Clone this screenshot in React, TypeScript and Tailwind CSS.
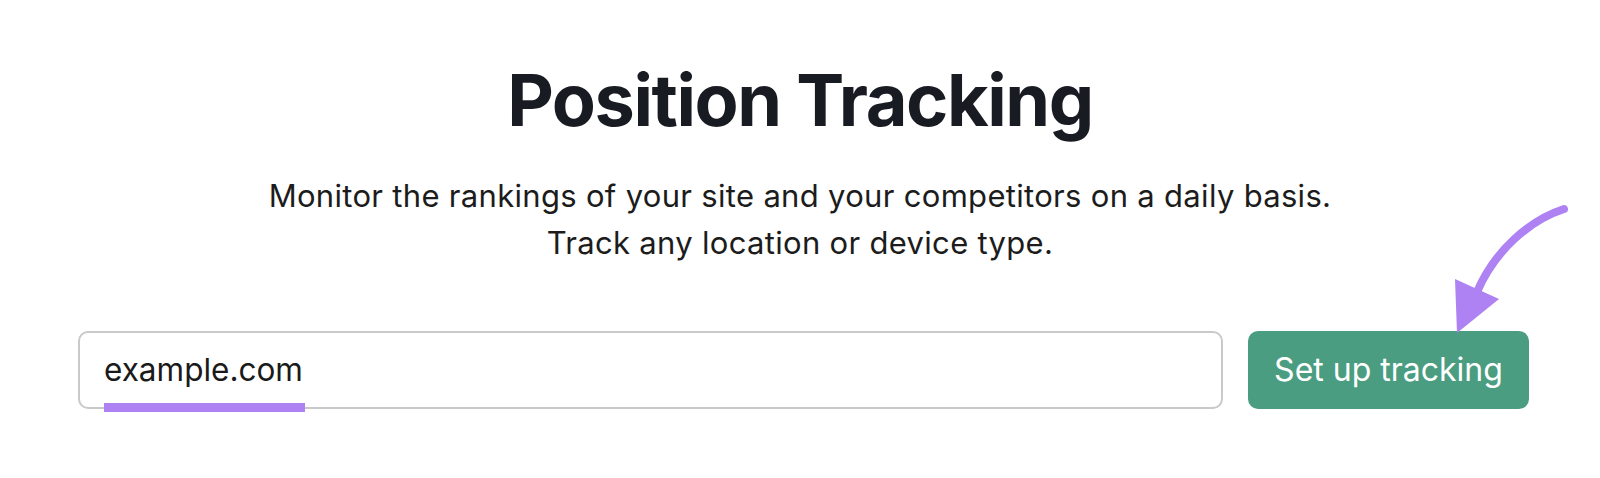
import React from "react";

export default function App() {
  return (
    <div className="relative w-[1600px] h-[478px] bg-white overflow-hidden" style={{ fontFamily: "Inter, 'Noto Sans', sans-serif" }}>
      <div className="flex flex-col items-center pt-[55px]">
        <h1 className="text-[72px] leading-[90px] font-bold text-[#191b23] tracking-[-0.02em]">Position Tracking</h1>
        <div className="mt-[27px] text-center text-[31px] leading-[47px] tracking-[0.01em] text-[#1c1c1c]">
          <p>Monitor the rankings of your site and your competitors on a daily basis.</p>
          <p>Track any location or device type.</p>
        </div>
      </div>
      <div className="flex items-stretch gap-[25px] pl-[78px] pr-[71px] mt-[65px]">
        <div className="relative flex-1 h-[78px] border-2 border-[#c9c9cc] rounded-[10px] flex items-center pl-[24px]">
          <span className="text-[31.5px] text-[#1a1a1a]">example.com</span>
          <div className="absolute left-[24px] bottom-[-5px] w-[201px] h-[9px] bg-[#ae82f3]" />
        </div>
        <button className="w-[281px] h-[78px] rounded-[10px] bg-[#4a9d80] text-white text-[32px] font-normal">Set up tracking</button>
      </div>
      <svg className="absolute left-0 top-0 pointer-events-none" width="1600" height="478" viewBox="0 0 1600 478">
        <path d="M1564 209 C1530 220 1495 250 1477 292" fill="none" stroke="#ae82f3" strokeWidth="8" strokeLinecap="round" />
        <polygon points="1455,279 1499,299 1457,333" fill="#ae82f3" />
      </svg>
    </div>
  );
}
